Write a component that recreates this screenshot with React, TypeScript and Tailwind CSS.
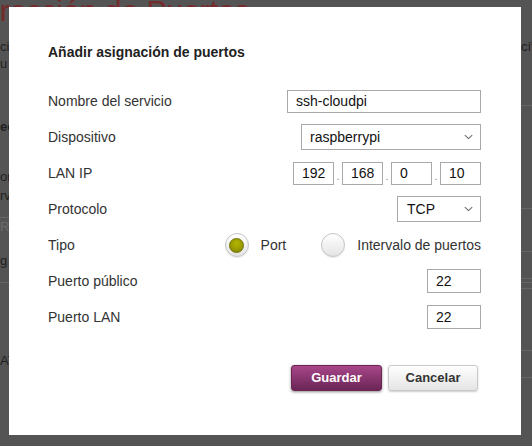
import React from "react";

function Chevron() {
  return (
    <svg width="9" height="6" viewBox="0 0 9 6" className="absolute right-[7px] top-1/2 -translate-y-1/2">
      <path d="M0.8 1.2 L4.5 4.6 L8.2 1.2" fill="none" stroke="#6b6b6b" strokeWidth="1.1" />
    </svg>
  );
}

function Radio({ checked }: { checked?: boolean }) {
  return (
    <span className="relative flex h-[24px] w-[24px] items-center justify-center rounded-full border border-[#c4c4c4] bg-linear-to-b from-[#ffffff] to-[#e4e4e4] shadow-[0_1px_1px_rgba(0,0,0,0.08)]">
      {checked && (
        <span className="h-[15px] w-[15px] rounded-full border border-[#6f7000] bg-[radial-gradient(circle_at_50%_35%,#b4b600,#979800_60%,#7c7d00)]" />
      )}
    </span>
  );
}

const field =
  "h-[23px] border border-[#a9a9a9] bg-white px-[8px] text-[14px] text-[#111] outline-none font-['Liberation_Sans',Arial,sans-serif]";

function Row({ label, children }: { label: string; children: React.ReactNode }) {
  return (
    <div className="flex h-[36px] items-center justify-between">
      <span className="text-[14px] text-[#333]">{label}</span>
      {children}
    </div>
  );
}

function BgRow({
  h,
  left,
  right,
  lb,
  rb,
  leftCls = "text-[#1f1f1f]",
}: {
  h: string;
  left?: string;
  right?: string;
  lb?: boolean;
  rb?: boolean;
  leftCls?: string;
}) {
  return (
    <div className={`flex ${h}`}>
      <div
        className={`w-[9px] overflow-hidden whitespace-nowrap text-[13px] leading-[18px] flex items-center ${leftCls} ${
          lb ? "border-b border-[#666666]" : ""
        }`}
      >
        {left}
      </div>
      <div
        className={`ml-auto w-[11px] overflow-hidden whitespace-nowrap text-[13px] text-[#1f1f1f] flex items-center ${
          rb ? "border-b border-[#666666]" : ""
        }`}
      >
        {right}
      </div>
    </div>
  );
}

export default function App() {
  return (
    <div className="relative h-[446px] w-[532px] overflow-hidden bg-[#545454] font-['Liberation_Sans',Arial,sans-serif]">
      {/* dimmed page behind the dialog */}
      <div className="flex flex-col">
        <div className="h-[30px] overflow-hidden">
          <h1 className="ml-[-62px] mt-[-4px] whitespace-nowrap text-[30px] leading-none font-normal text-[#762a2a]">
            Redirección de Puertos
          </h1>
        </div>
        <BgRow h="h-[8px]" />
        <BgRow h="h-[18px]" left="ci" right="cíf" />
        <BgRow h="h-[16px]" left="u" />
        <BgRow h="h-[34px]" rb />
        <BgRow h="h-[12px]" />
        <BgRow h="h-[18px]" left="ec" leftCls="text-[#1f1f1f] font-bold" />
        <BgRow h="h-[32px]" />
        <BgRow h="h-[18px]" left="or" />
        <BgRow h="h-[19px]" left="rv" />
        <BgRow h="h-[4px]" rb />
        <BgRow h="h-[9px]" lb />
        <BgRow h="h-[18px]" left="R6" leftCls="text-[#6a6a6a]" />
        <BgRow h="h-[16px]" rb />
        <BgRow h="h-[18px]" left="g" />
        <BgRow h="h-[9px]" rb />
        <BgRow h="h-[4px]" lb rb />
        <BgRow h="h-[6px]" rb />
        <BgRow h="h-[62px]" rb />
        <BgRow h="h-[19px]" left="AT" />
        <BgRow h="h-[8px]" rb />
      </div>

      {/* dialog */}
      <div className="absolute left-[9px] top-[7px] h-[428px] w-[512px] bg-white pl-[39px] pr-[40px] pt-[35px]">
        <h2 className="text-[14px] font-bold leading-[20px] text-[#222]">Añadir asignación de puertos</h2>

        <div className="mt-[21px] flex flex-col">
          <Row label="Nombre del servicio">
            <input readOnly defaultValue="ssh-cloudpi" className={`${field} w-[194px]`} />
          </Row>
          <Row label="Dispositivo">
            <div className="relative flex h-[26px] w-[180px] items-center border border-[#a9a9a9] bg-white pl-[8px] text-[14px] text-[#111]">
              raspberrypi
              <Chevron />
            </div>
          </Row>
          <Row label="LAN IP">
            <div className="flex items-center">
              <input readOnly defaultValue="192" className={`${field} w-[41px]`} />
              <span className="flex h-[23px] w-[8px] items-end justify-center pb-[3px] text-[10px] leading-none text-[#888]">.</span>
              <input readOnly defaultValue="168" className={`${field} w-[41px]`} />
              <span className="flex h-[23px] w-[8px] items-end justify-center pb-[3px] text-[10px] leading-none text-[#888]">.</span>
              <input readOnly defaultValue="0" className={`${field} w-[41px]`} />
              <span className="flex h-[23px] w-[8px] items-end justify-center pb-[3px] text-[10px] leading-none text-[#888]">.</span>
              <input readOnly defaultValue="10" className={`${field} w-[41px]`} />
            </div>
          </Row>
          <Row label="Protocolo">
            <div className="relative flex h-[26px] w-[84px] items-center border border-[#a9a9a9] bg-white pl-[9px] text-[14px] text-[#111]">
              TCP
              <Chevron />
            </div>
          </Row>
          <Row label="Tipo">
            <div className="flex items-center text-[14px] text-[#333]">
              <Radio checked />
              <span className="ml-[12px]">Port</span>
              <span className="ml-[35px]">
                <Radio />
              </span>
              <span className="ml-[12px]">Intervalo de puertos</span>
            </div>
          </Row>
          <Row label="Puerto público">
            <input readOnly defaultValue="22" className={`${field} h-[24px] w-[54px]`} />
          </Row>
          <Row label="Puerto LAN">
            <input readOnly defaultValue="22" className={`${field} h-[24px] w-[54px]`} />
          </Row>
        </div>

        <div className="mt-[30px] flex justify-end gap-[6px] pr-[3px]">
          <button className="h-[26px] w-[91px] rounded-[3px] border border-[#6a2553] bg-linear-to-b from-[#a8478a] to-[#6b2556] text-[13px] font-bold text-white shadow-[0_1px_3px_rgba(0,0,0,0.45)]">
            Guardar
          </button>
          <button className="h-[26px] w-[90px] rounded-[3px] border border-[#c9c9c9] bg-linear-to-b from-[#fefefe] to-[#e5e5e5] text-[13px] font-bold text-[#333] shadow-[0_1px_2px_rgba(0,0,0,0.2)]">
            Cancelar
          </button>
        </div>
      </div>
    </div>
  );
}
